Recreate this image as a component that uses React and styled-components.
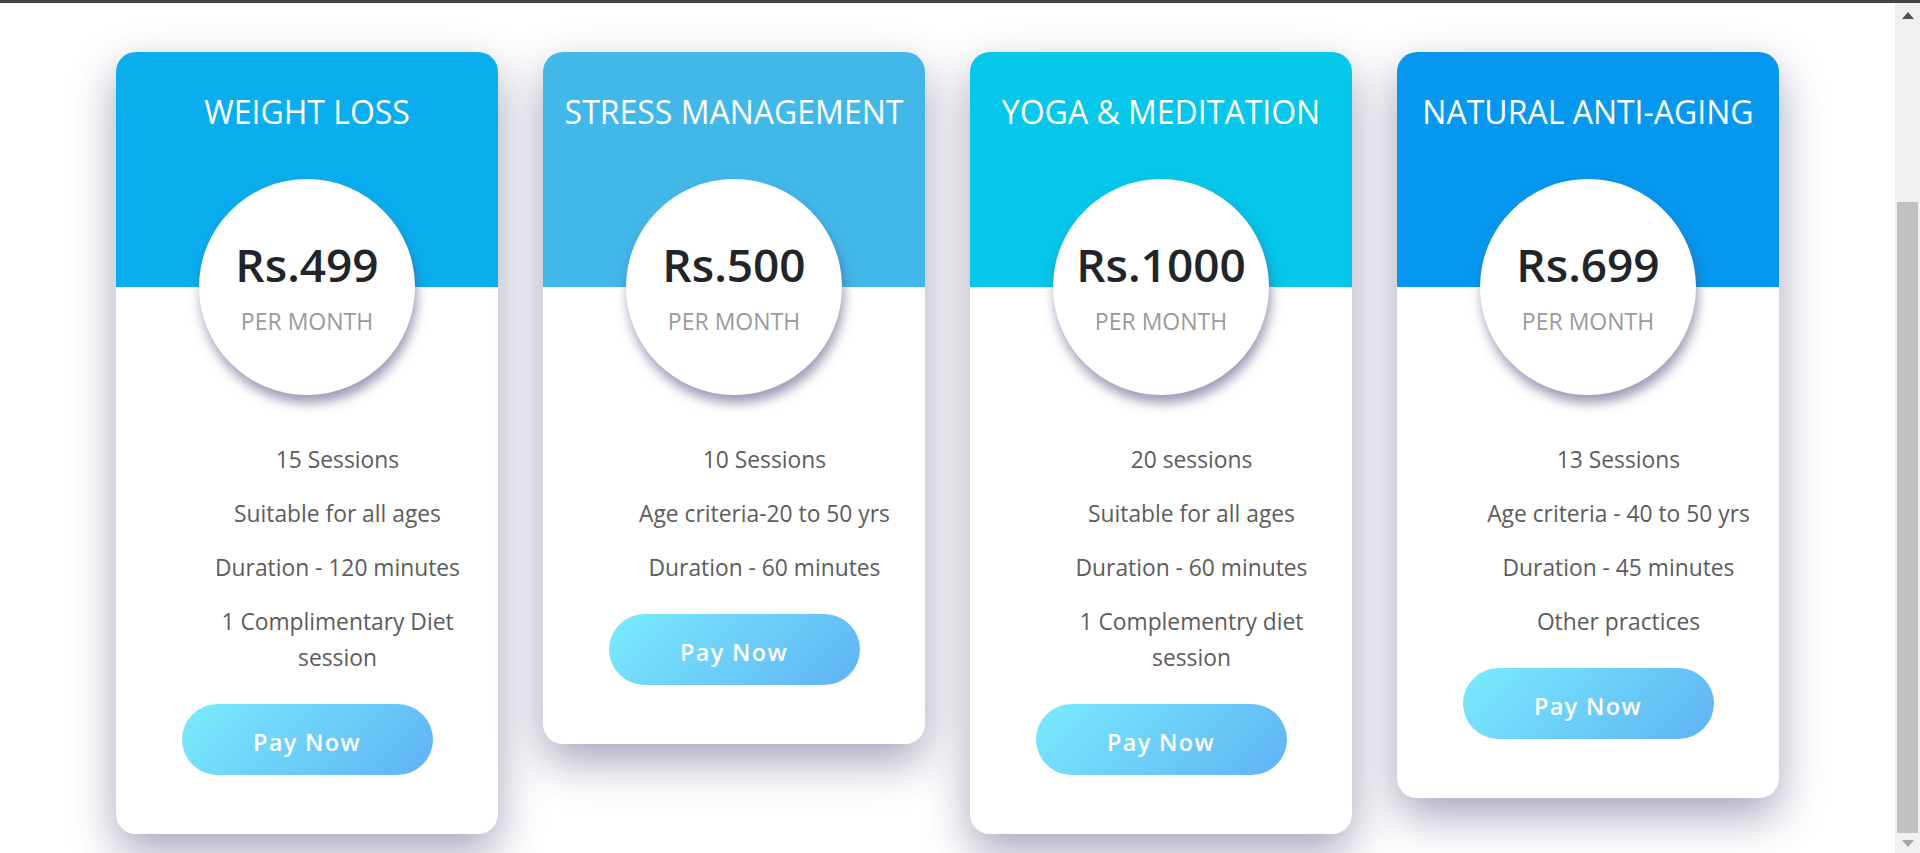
import React from "react"
import styled, { createGlobalStyle } from "styled-components"

const GlobalStyle = createGlobalStyle`
  html, body {
    margin: 0;
    padding: 0;
    background: #fff;
    font-family: "Segoe UI", "Open Sans", "Noto Sans", sans-serif;
  }
  * { box-sizing: border-box; }
`

const plans = [
  {
    title: "WEIGHT LOSS",
    color: "#0aaeef",
    price: "Rs.499",
    items: ["15 Sessions", "Suitable for all ages", "Duration - 120 minutes", "1 Complimentary Diet session"],
  },
  {
    title: "STRESS MANAGEMENT",
    color: "#42b8e9",
    price: "Rs.500",
    items: ["10 Sessions", "Age criteria-20 to 50 yrs", "Duration - 60 minutes"],
  },
  {
    title: "YOGA & MEDITATION",
    color: "#05c7e9",
    price: "Rs.1000",
    items: ["20 sessions", "Suitable for all ages", "Duration - 60 minutes", "1 Complementry diet session"],
  },
  {
    title: "NATURAL ANTI-AGING",
    color: "#0598ee",
    price: "Rs.699",
    items: ["13 Sessions", "Age criteria - 40 to 50 yrs", "Duration - 45 minutes", "Other practices"],
  },
]

const Page = styled.div`
  height: 100vh;
  display: flex;
  flex-direction: column;
  overflow: hidden;
`

const TopBar = styled.div`
  height: 3px;
  flex-shrink: 0;
  background: #454545;
`

const Frame = styled.div`
  flex: 1;
  display: flex;
  min-height: 0;
`

const Main = styled.main`
  flex: 1;
  padding-top: 49px;
`

const CardRow = styled.div`
  display: flex;
  justify-content: center;
  align-items: flex-start;
  gap: 45px;
`

const Card = styled.div`
  width: 382px;
  flex-shrink: 0;
  background: #fff;
  border-radius: 20px;
  box-shadow: 0 18px 45px rgba(45, 40, 95, 0.42);
  display: flex;
  flex-direction: column;
  align-items: center;
  padding-bottom: 59px;
`

const Header = styled.div`
  width: 100%;
  height: 235px;
  background: ${props => props.color};
  border-radius: 20px 20px 0 0;
  padding-top: 41px;
  text-align: center;
`

const Title = styled.h3`
  margin: 0;
  color: #fff;
  font-size: 32px;
  font-weight: 400;
  line-height: 38px;
  white-space: nowrap;
`

const PriceCircle = styled.div`
  width: 216px;
  height: 216px;
  margin-top: -108px;
  border-radius: 50%;
  background: #fff;
  box-shadow: 2px 8px 12px rgba(80, 70, 120, 0.55);
  display: flex;
  flex-direction: column;
  align-items: center;
  padding-top: 61px;
  position: relative;
`

const Price = styled.div`
  font-size: 46px;
  font-weight: 600;
  line-height: 48px;
  color: #212529;
`

const PerMonth = styled.div`
  margin-top: 21px;
  font-size: 23px;
  line-height: 24px;
  color: #9a9a9a;
  text-transform: uppercase;
`

const Features = styled.ul`
  list-style: none;
  margin: 47px 0 0;
  width: 100%;
  padding: 0 15px 0 76px;
  display: flex;
  flex-direction: column;
  gap: 18px;
`

const Feature = styled.li`
  font-size: 22.8px;
  line-height: 36px;
  color: #5c5c5c;
  text-align: center;
`

const PayButton = styled.button`
  margin-top: 28px;
  width: 251px;
  height: 71px;
  padding: 4px 0 0;
  border: none;
  border-radius: 36px;
  background: linear-gradient(135deg, #7aebfd 0%, #5fb2f4 100%);
  color: #fff;
  font-family: inherit;
  font-size: 23.5px;
  font-weight: 600;
  letter-spacing: 1.3px;
  cursor: pointer;
`

const ScrollTrack = styled.div`
  width: 25px;
  flex-shrink: 0;
  background: #f0f0f0;
  display: flex;
  flex-direction: column;
  align-items: center;
`

const ArrowBox = styled.div`
  height: ${props => props.h}px;
  width: 100%;
  display: flex;
  align-items: center;
  justify-content: center;
  flex-shrink: 0;
`

const Spacer = styled.div`
  flex: 1;
`

const Thumb = styled.div`
  width: 21px;
  height: 631px;
  background: #c1c1c1;
`

function Arrow({ down }) {
  return (
    <svg width="12" height="7" viewBox="0 0 12 7">
      <polygon points={down ? "0,0 12,0 6,7" : "0,7 12,7 6,0"} fill={down ? "#a3a3a3" : "#505050"} />
    </svg>
  )
}

function PlanCard({ plan }) {
  return (
    <Card>
      <Header color={plan.color}>
        <Title>{plan.title}</Title>
      </Header>
      <PriceCircle>
        <Price>{plan.price}</Price>
        <PerMonth>Per Month</PerMonth>
      </PriceCircle>
      <Features>
        {plan.items.map(item => (
          <Feature key={item}>{item}</Feature>
        ))}
      </Features>
      <PayButton>Pay Now</PayButton>
    </Card>
  )
}

export default function App() {
  return (
    <Page>
      <GlobalStyle />
      <TopBar />
      <Frame>
        <Main>
          <CardRow>
            {plans.map(plan => (
              <PlanCard key={plan.title} plan={plan} />
            ))}
          </CardRow>
        </Main>
        <ScrollTrack>
          <ArrowBox h={24}>
            <Arrow />
          </ArrowBox>
          <Spacer />
          <Thumb />
          <ArrowBox h={20}>
            <Arrow down />
          </ArrowBox>
        </ScrollTrack>
      </Frame>
    </Page>
  )
}
